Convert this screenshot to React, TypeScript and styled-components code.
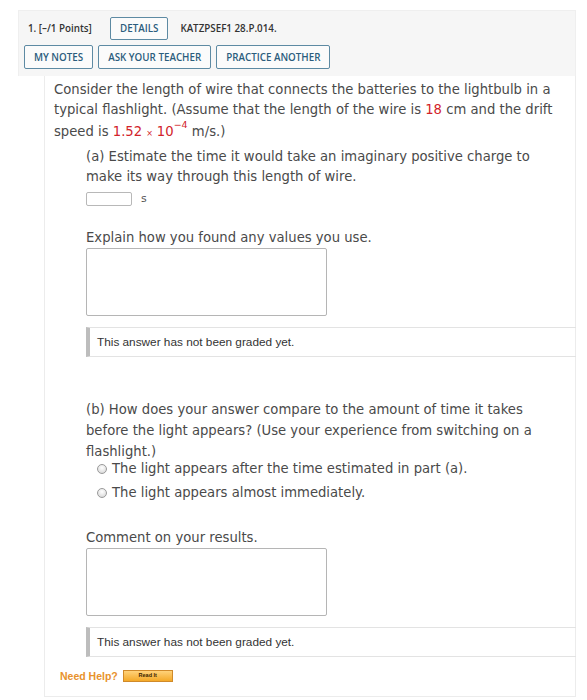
import React from "react";
import styled, { createGlobalStyle } from "styled-components";

const Global = createGlobalStyle`
  html, body { margin: 0; padding: 0; background: #fff; }
  body { font-family: "DejaVu Sans", Verdana, sans-serif; }
`;

const Page = styled.div`
  padding: 10px 11px 0 18px;
  width: 558px;
`;

const Header = styled.div`
  background: #f6f6f6;
  border: 1px solid #efefef;
  border-bottom: none;
  padding: 6px 0 5px 5px;
  display: flex;
  flex-direction: column;
  gap: 5px;
  height: 54px;
`;

const Row = styled.div<{ $gap?: number }>`
  display: flex;
  align-items: center;
  gap: ${(p) => p.$gap ?? 5}px;
`;

const Points = styled.span`
  font-family: "Open Sans", sans-serif;
  font-weight: 600;
  font-size: 9.8px;
  color: #333;
  margin-left: 4px;
  width: 82px;
`;

const Code = styled.span`
  font-family: "Open Sans", sans-serif;
  font-weight: 600;
  font-size: 9.8px;
  color: #333;
  margin-left: 12px;
`;

const HButton = styled.button<{ $h?: number; $px?: number }>`
  font-family: "Open Sans", sans-serif;
  font-weight: 600;
  font-size: 9.8px;
  color: #2b5d7d;
  background: #fbfbfb;
  border: 1px solid #5d8aa3;
  border-radius: 2px;
  height: ${(p) => p.$h ?? 24}px;
  padding: 0 ${(p) => p.$px ?? 9}px;
  text-transform: uppercase;
  cursor: pointer;
`;

const Panel = styled.div`
  margin-left: 26px;
  border-left: 1px solid #ececec;
  border-right: 1px solid #ececec;
  border-bottom: 1px solid #ececec;
  padding: 4px 0 14px 9px;
  color: #4a4a4a;
  font-size: 13.2px;
  line-height: 20px;
`;

const Para = styled.p`
  margin: 0;
  padding-right: 14px;
`;

const Red = styled.span`
  color: #d2232a;
`;

const RedSup = styled.sup`
  color: #d2232a;
  font-size: 9.5px;
  line-height: 1;
  vertical-align: 8px;
`;

const Times = styled.span`
  color: #d2232a;
  font-size: 8px;
  line-height: 1;
  margin: 0 4px;
`;

const Part = styled.div`
  margin-left: 32px;
`;

const PartText = styled.p<{ $mt?: number }>`
  margin: ${(p) => p.$mt ?? 0}px 0 0 0;
  padding-right: 38px;
  line-height: ${(p) => (p.$mt && p.$mt > 20 ? 21 : 20)}px;
`;

const InputRow = styled.div`
  display: flex;
  align-items: center;
  gap: 9px;
  margin-top: 5px;
  height: 14px;
`;

const SmallInput = styled.div`
  width: 44px;
  height: 12px;
  border: 1px solid #b8b8b8;
  border-radius: 2px;
  background: #fff;
`;

const Unit = styled.span`
  font-size: 11px;
  color: #555;
`;

const Label = styled.div<{ $mt?: number }>`
  margin-top: ${(p) => p.$mt ?? 0}px;
  line-height: 18px;
`;

const TextArea = styled.div`
  margin-top: 1px;
  width: 239px;
  height: 66px;
  border: 1px solid #b5b5b5;
  border-radius: 2px;
  background: #fff;
`;

const Graded = styled.div`
  margin-top: 11px;
  height: 28px;
  border-top: 1px solid #e3e3e3;
  border-bottom: 1px solid #e3e3e3;
  border-left: 4px solid #bdbdbd;
  display: flex;
  align-items: center;
  padding-left: 7px;
  font-family: "Liberation Sans", Arial, sans-serif;
  font-size: 11.8px;
  color: #333;
  margin-right: -1px;
`;

const Options = styled.div`
  margin-left: 11px;
  margin-top: -3px;
  display: flex;
  flex-direction: column;
  gap: 4px;
`;

const Option = styled.label`
  display: flex;
  align-items: center;
  gap: 5px;
  line-height: 20px;
`;

const Radio = styled.span`
  width: 8px;
  height: 8px;
  border-radius: 50%;
  border: 1px solid #9a9a9a;
  background: radial-gradient(circle at 50% 35%, #ffffff 0%, #e4e4e4 60%, #cfcfcf 100%);
  flex-shrink: 0;
`;

const Help = styled.div`
  display: flex;
  align-items: center;
  gap: 5px;
  margin-top: 13px;
  margin-left: 6px;
  height: 12px;
`;

const HelpText = styled.span`
  font-family: "Liberation Sans", Arial, sans-serif;
  font-weight: bold;
  font-size: 10.5px;
  color: #e8922c;
`;

const ReadIt = styled.span`
  display: inline-flex;
  align-items: center;
  justify-content: center;
  width: 48px;
  height: 10px;
  border: 1px solid #d08a2a;
  background: linear-gradient(#ffd27a, #f4a928);
  font-family: "Liberation Sans", Arial, sans-serif;
  font-weight: bold;
  font-size: 5.5px;
  color: #3a2500;
  line-height: 1;
`;

export default function App() {
  return (
    <Page>
      <Global />
      <Header>
        <Row $gap={0}>
          <Points>1. [–/1 Points]</Points>
          <HButton $h={23} $px={9}>Details</HButton>
          <Code>KATZPSEF1 28.P.014.</Code>
        </Row>
        <Row $gap={5}>
          <HButton>My Notes</HButton>
          <HButton>Ask Your Teacher</HButton>
          <HButton>Practice Another</HButton>
        </Row>
      </Header>
      <Panel>
        <Para>
          Consider the length of wire that connects the batteries to the lightbulb in a typical
          flashlight. (Assume that the length of the wire is <Red>18</Red> cm and the drift speed is{" "}
          <Red>1.52</Red>
          <Times>×</Times>
          <Red>10</Red>
          <RedSup>−4</RedSup> m/s.)
        </Para>
        <Part>
          <PartText $mt={5}>
            (a) Estimate the time it would take an imaginary positive charge to make its way through
            this length of wire.
          </PartText>
          <InputRow>
            <SmallInput />
            <Unit>s</Unit>
          </InputRow>
          <Label $mt={23}>Explain how you found any values you use.</Label>
          <TextArea />
          <Graded>This answer has not been graded yet.</Graded>
          <PartText $mt={42}>
            (b) How does your answer compare to the amount of time it takes before the light appears?
            (Use your experience from switching on a flashlight.)
          </PartText>
          <Options>
            <Option>
              <Radio />
              The light appears after the time estimated in part (a).
            </Option>
            <Option>
              <Radio />
              The light appears almost immediately.
            </Option>
          </Options>
          <Label $mt={26}>Comment on your results.</Label>
          <TextArea />
          <Graded>This answer has not been graded yet.</Graded>
        </Part>
        <Help>
          <HelpText>Need Help?</HelpText>
          <ReadIt>Read It</ReadIt>
        </Help>
      </Panel>
    </Page>
  );
}
